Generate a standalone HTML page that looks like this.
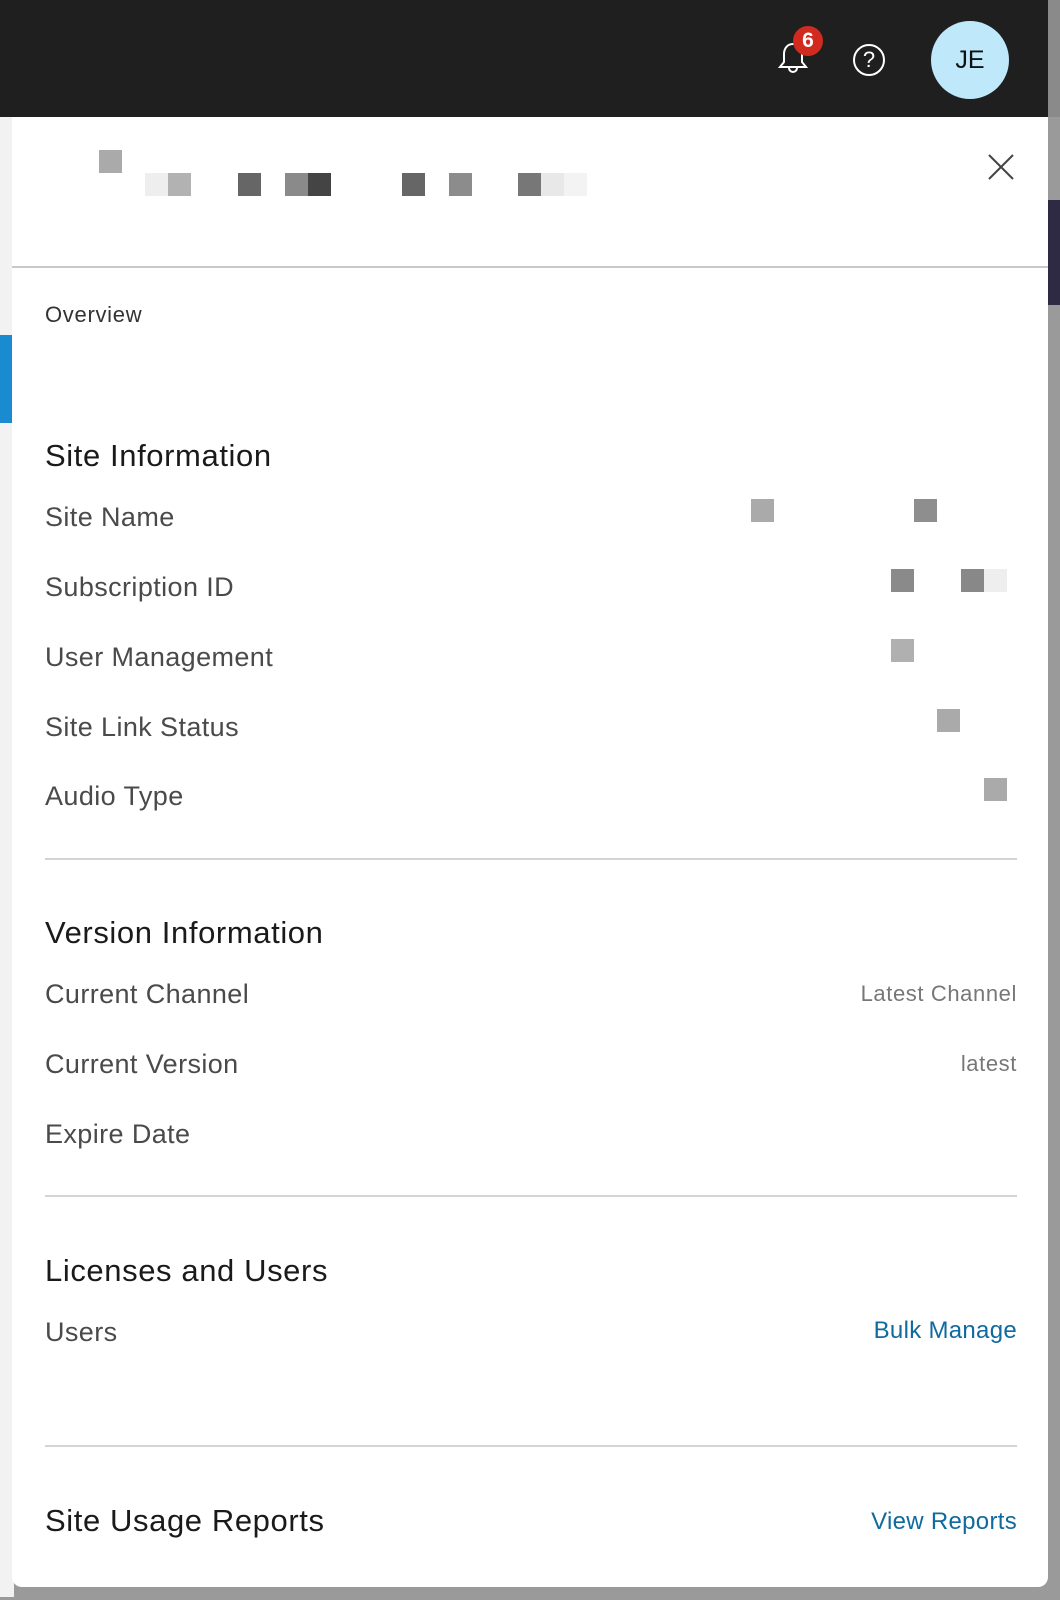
<!DOCTYPE html>
<html><head><style>
body{margin:0;width:1060px;height:1600px;background:#8a8a8a;position:relative;overflow:hidden;font-family:"Liberation Sans",Arial,sans-serif;}
.hdr{position:absolute;left:0;top:0;width:1048px;height:117px;background:#1f1f1f;}
.bg{position:absolute;left:0;top:117px;width:1060px;height:1483px;background:#9a9a9a;}
.leftbg{position:absolute;left:0;top:117px;width:14px;height:1480px;background:#f2f2f2;}
.panel{position:absolute;left:12px;top:117px;width:1036px;height:1470px;background:#fff;border-radius:0 0 10px 10px;}
.t{position:absolute;color:#333;white-space:nowrap;}
.lbl{font-size:27px;color:#4a4a4a;left:45px;letter-spacing:0.4px;}
.h{font-size:31px;color:#1a1a1a;left:45px;letter-spacing:0.6px;}
.r{right:43px;font-size:22px;color:#777;letter-spacing:0.6px;}
.hr{position:absolute;left:45px;width:972px;height:2px;background:#d4d4d4;}
.sq{position:absolute;width:23px;height:23px;}
</style></head><body>
<div class="bg"></div>
<div style="position:absolute;left:1048px;top:200px;width:12px;height:105px;background:#2e2a44"></div>
<div class="leftbg"></div>
<div style="position:absolute;left:0;top:335px;width:14px;height:88px;background:#1a8bd0"></div>
<div class="hdr">
  <svg style="position:absolute;left:776px;top:40px" width="34" height="36" viewBox="0 0 34 36"><path d="M17 4c-6 0-9 5-9 10v8l-4 5h26l-4-5v-8c0-5-3-10-9-10z M13 28a4 4 0 0 0 8 0" fill="none" stroke="#fff" stroke-width="2"/></svg>
  <div style="position:absolute;left:793px;top:26px;width:30px;height:30px;border-radius:50%;background:#d12b20;color:#fff;font-weight:bold;font-size:21px;text-align:center;line-height:30px">6</div>
  <div style="position:absolute;left:853px;top:44px;width:28px;height:28px;border:2px solid #fff;border-radius:50%;color:#fff;font-size:22px;text-align:center;line-height:28px">?</div>
  <div style="position:absolute;left:931px;top:21px;width:78px;height:78px;border-radius:50%;background:#bfe8fb;color:#111;font-size:25px;text-align:center;line-height:78px">JE</div>
</div>
<div class="panel"></div>
<svg style="position:absolute;left:987px;top:153px" width="28" height="28"><path d="M2 2L26 26M26 2L2 26" stroke="#444" stroke-width="2"/></svg>
<div class="sq" style="left:99px;top:150px;background:#aaa"></div>
<div class="sq" style="left:145px;top:173px;background:#eee"></div>
<div class="sq" style="left:168px;top:173px;background:#b2b2b2"></div>
<div class="sq" style="left:238px;top:173px;background:#666"></div>
<div class="sq" style="left:285px;top:173px;background:#8a8a8a"></div>
<div class="sq" style="left:308px;top:173px;background:#444"></div>
<div class="sq" style="left:402px;top:173px;background:#666"></div>
<div class="sq" style="left:449px;top:173px;background:#8c8c8c"></div>
<div class="sq" style="left:518px;top:173px;background:#777"></div>
<div class="sq" style="left:541px;top:173px;background:#e8e8e8"></div>
<div class="sq" style="left:564px;top:173px;background:#f3f3f3"></div>
<div style="position:absolute;left:12px;top:266px;width:1036px;height:2px;background:#c8c8c8"></div>
<div class="t" style="left:45px;top:302px;font-size:22px;color:#333;letter-spacing:0.7px">Overview</div>
<div class="t h" style="top:438px">Site Information</div>
<div class="t lbl" style="top:502px">Site Name</div>
<div class="t lbl" style="top:572px">Subscription ID</div>
<div class="t lbl" style="top:642px">User Management</div>
<div class="t lbl" style="top:712px">Site Link Status</div>
<div class="t lbl" style="top:781px">Audio Type</div>
<div class="sq" style="left:751px;top:499px;background:#aaa"></div>
<div class="sq" style="left:914px;top:499px;background:#8e8e8e"></div>
<div class="sq" style="left:891px;top:569px;background:#8a8a8a"></div>
<div class="sq" style="left:961px;top:569px;background:#888"></div>
<div class="sq" style="left:984px;top:569px;background:#eee"></div>
<div class="sq" style="left:891px;top:639px;background:#b0b0b0"></div>
<div class="sq" style="left:937px;top:709px;background:#aaa"></div>
<div class="sq" style="left:984px;top:778px;background:#aaa"></div>
<div class="hr" style="top:858px"></div>
<div class="t h" style="top:915px">Version Information</div>
<div class="t lbl" style="top:979px">Current Channel</div>
<div class="t lbl" style="top:1049px">Current Version</div>
<div class="t lbl" style="top:1119px">Expire Date</div>
<div class="t r" style="top:981px">Latest Channel</div>
<div class="t r" style="top:1051px">latest</div>
<div class="hr" style="top:1195px"></div>
<div class="t h" style="top:1253px">Licenses and Users</div>
<div class="t lbl" style="top:1317px">Users</div>
<div class="t r" style="top:1317px;font-size:24px;color:#0f6a9e;letter-spacing:0.3px">Bulk Manage</div>
<div class="hr" style="top:1445px"></div>
<div class="t h" style="top:1503px">Site Usage Reports</div>
<div class="t r" style="top:1508px;font-size:24px;color:#0f6a9e;letter-spacing:0.3px">View Reports</div>
</body></html>
